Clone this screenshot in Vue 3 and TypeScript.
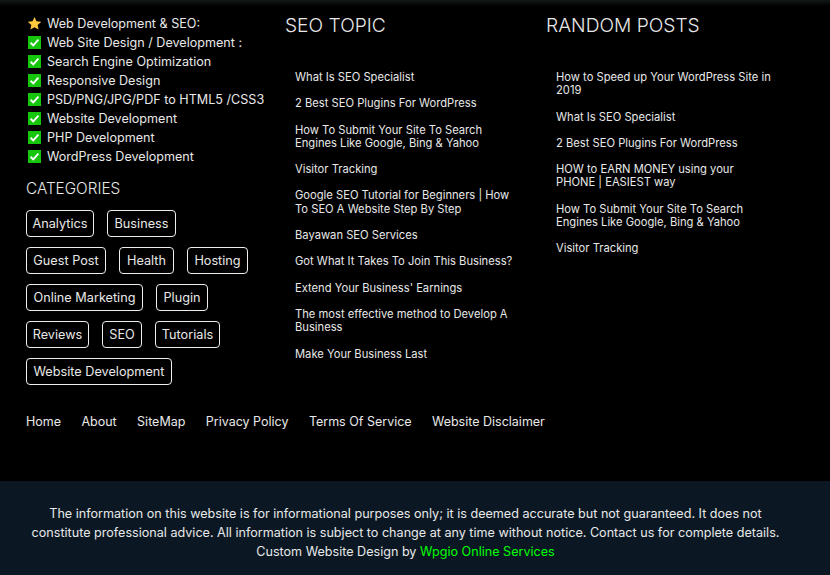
<script setup lang="ts">
interface Tag { label: string; width: number }
const services: string[] = [
  'Web Site Design / Development :',
  'Search Engine Optimization',
  'Responsive Design',
  'PSD/PNG/JPG/PDF to HTML5 /CSS3',
  'Website Development',
  'PHP Development',
  'WordPress Development',
]
const tagRows: Tag[][] = [
  [{ label: 'Analytics', width: 68 }, { label: 'Business', width: 69 }],
  [{ label: 'Guest Post', width: 80 }, { label: 'Health', width: 55 }, { label: 'Hosting', width: 61 }],
  [{ label: 'Online Marketing', width: 117 }, { label: 'Plugin', width: 52 }],
  [{ label: 'Reviews', width: 63 }, { label: 'SEO', width: 40 }, { label: 'Tutorials', width: 65 }],
  [{ label: 'Website Development', width: 146 }],
]
const topics: string[] = [
  'What Is SEO Specialist',
  '2 Best SEO Plugins For WordPress',
  'How To Submit Your Site To Search Engines Like Google, Bing & Yahoo',
  'Visitor Tracking',
  'Google SEO Tutorial for Beginners | How To SEO A Website Step By Step',
  'Bayawan SEO Services',
  'Got What It Takes To Join This Business?',
  "Extend Your Business' Earnings",
  'The most effective method to Develop A Business',
  'Make Your Business Last',
]
const posts: string[] = [
  'How to Speed up Your WordPress Site in 2019',
  'What Is SEO Specialist',
  '2 Best SEO Plugins For WordPress',
  'HOW to EARN MONEY using your PHONE | EASIEST way',
  'How To Submit Your Site To Search Engines Like Google, Bing & Yahoo',
  'Visitor Tracking',
]
const links: string[] = ['Home', 'About', 'SiteMap', 'Privacy Policy', 'Terms Of Service', 'Website Disclaimer']
</script>

<template>
  <div class="page">
    <div class="main">
      <div class="columns">
        <section class="col first">
          <ul class="services">
            <li>
              <svg class="ico" viewBox="0 0 14 14"><path d="M7 0l2.1 4.6 5 .6-3.7 3.4 1 4.9L7 11.1l-4.4 2.4 1-4.9L-.1 5.2l5-.6z" fill="#ffc83d" /></svg>
              <span>Web Development &amp; SEO:</span>
            </li>
            <li v-for="s in services" :key="s">
              <svg class="ico" viewBox="0 0 14 14"><rect width="14" height="14" fill="#16c60c" /><path d="M2.8 7.3l2.9 2.9L11.2 4" fill="none" stroke="#fff" stroke-width="2" /></svg>
              <span>{{ s }}</span>
            </li>
          </ul>
          <h3 class="cat-title">CATEGORIES</h3>
          <div class="tags">
            <div v-for="(row, i) in tagRows" :key="i" class="tag-row">
              <a v-for="t in row" :key="t.label" class="tag" :style="{ width: t.width + 'px' }">{{ t.label }}</a>
            </div>
          </div>
        </section>
        <section class="col">
          <h3 class="col-title">SEO TOPIC</h3>
          <ul class="posts">
            <li v-for="t in topics" :key="t">{{ t }}</li>
          </ul>
        </section>
        <section class="col">
          <h3 class="col-title">RANDOM POSTS</h3>
          <ul class="posts">
            <li v-for="t in posts" :key="t">{{ t }}</li>
          </ul>
        </section>
      </div>
      <nav class="links">
        <a v-for="l in links" :key="l">{{ l }}</a>
      </nav>
    </div>
    <footer class="foot">
      <p>The information on this website is for informational purposes only; it is deemed accurate but not guaranteed. It does not<br />constitute professional advice. All information is subject to change at any time without notice. Contact us for complete details.<br />Custom Website Design by <a class="brand">Wpgio Online Services</a></p>
    </footer>
  </div>
</template>

<style>
html, body { margin: 0; background: #000; }
</style>

<style scoped>
.page {
  width: 830px;
  height: 575px;
  background: #000;
  color: #e8e8e8;
  font-family: "Inter", "Liberation Sans", sans-serif;
  display: flex;
  flex-direction: column;
  overflow: hidden;
}
.main {
  height: 481px;
  box-sizing: border-box;
  padding: 0 0 0 26px;
  background: linear-gradient(#141819, #000 6px);
}
.columns { display: flex; }
.col { width: 261px; flex: none; }
.first { width: 259px; }
ul { list-style: none; margin: 0; padding: 0; }
.services { padding-top: 14px; font-size: 12.6px; line-height: 19px; }
.services li { display: flex; align-items: center; padding-left: 2px; gap: 6px; height: 19px; }
.ico { width: 13px; height: 13px; flex: none; }
.cat-title { margin: 11px 0 0; font-size: 15.3px; line-height: 24px; font-weight: 300; }
.tags { margin-top: 9px; display: flex; flex-direction: column; gap: 10px; }
.tag-row { display: flex; gap: 13px; }
.tag {
  height: 27px;
  box-sizing: border-box;
  border: 1px solid #eee;
  border-radius: 4px;
  text-align: center;
  font-size: 12.7px;
  line-height: 25px;
  white-space: nowrap;
}
.col-title { margin: 12px 0 0; font-size: 19.2px; line-height: 26px; font-weight: 300; }
.posts { margin-top: 33px; padding: 0 33px 0 10px; font-size: 11.2px; line-height: 13.3px; }
.posts li { margin-bottom: 13px; }
.links { margin-top: 27px; display: flex; gap: 20.4px; font-size: 12.5px; line-height: 20px; }
.foot {
  height: 94px;
  background: #0b1824;
  box-sizing: border-box;
  padding: 23px 19px 0 0;
  text-align: center;
  font-size: 12.6px;
  line-height: 19px;
}
.foot p { margin: 0; }
.brand { color: #0f0; }
</style>
